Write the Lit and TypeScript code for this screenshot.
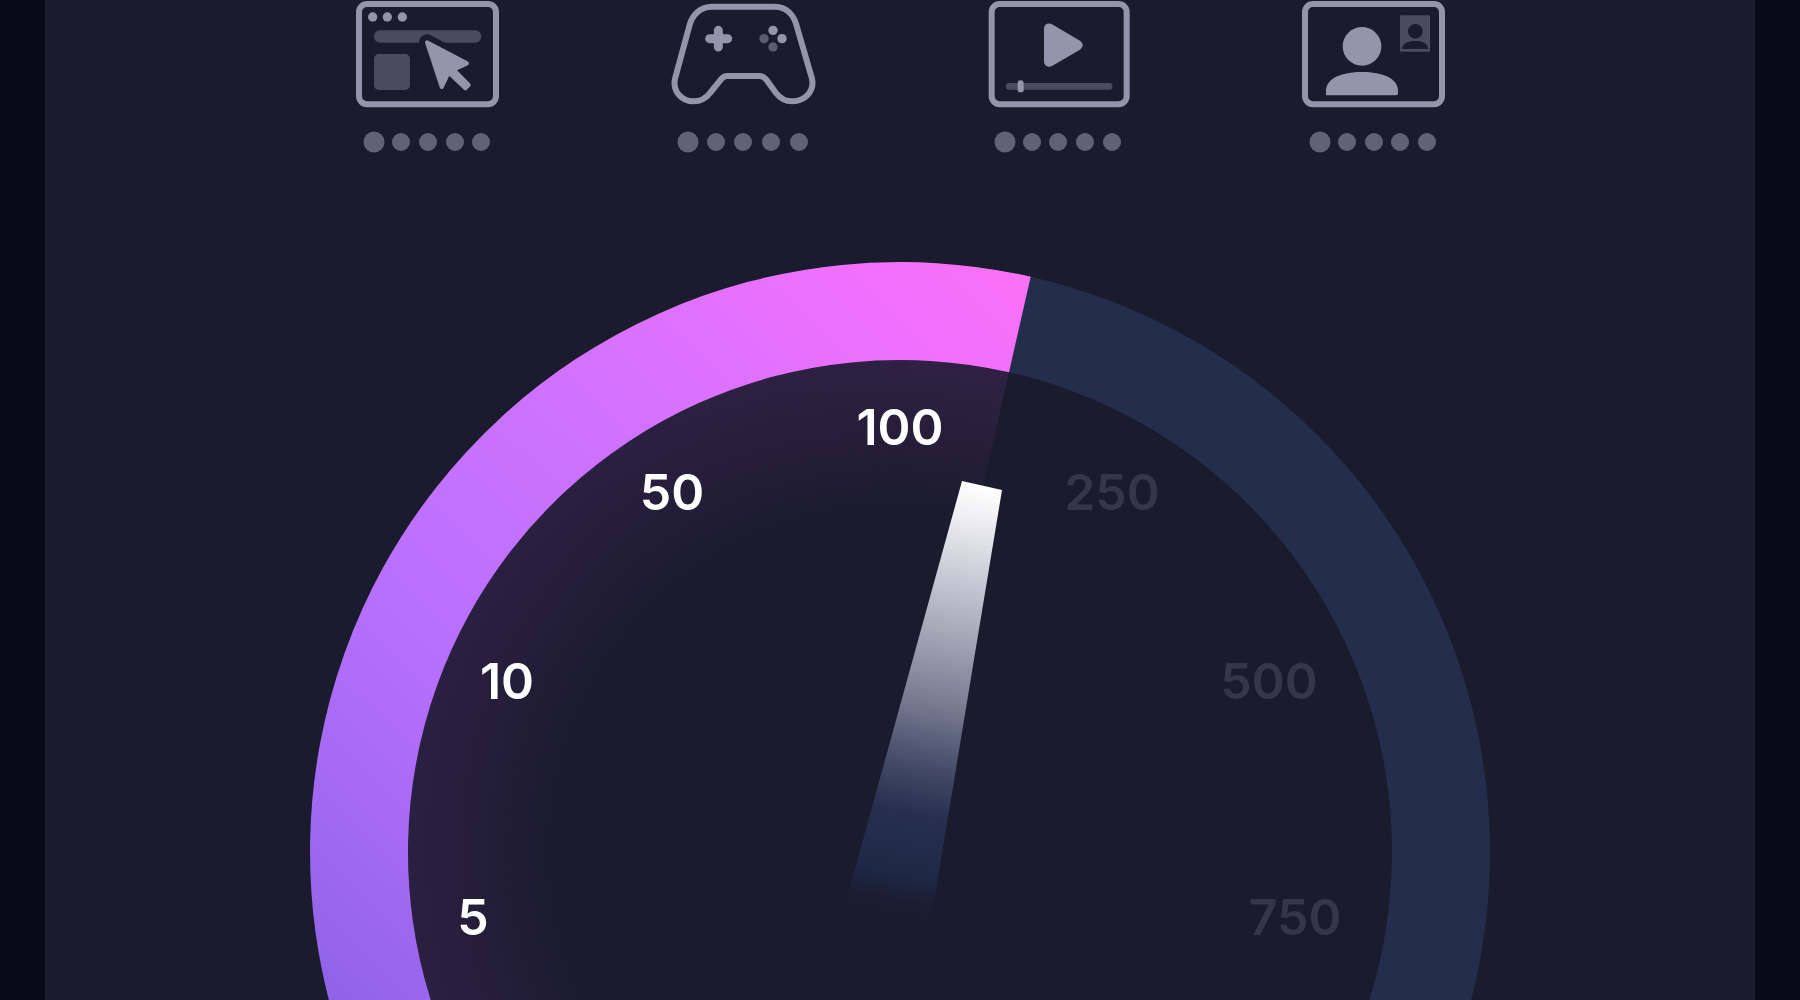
import { LitElement, html, svg, css } from "lit";
import { customElement } from "lit/decorators.js";

type Mark = { value: string; x: number; y: number; reached: boolean };

// Label positions are measured from the hub of the dial.
const MARKS: Mark[] = [
  { value: "5", x: -427, y: 65, reached: true },
  { value: "10", x: -393, y: -171, reached: true },
  { value: "50", x: -228, y: -360, reached: true },
  { value: "100", x: 0, y: -425, reached: true },
  { value: "250", x: 212, y: -360, reached: false },
  { value: "500", x: 369, y: -171, reached: false },
  { value: "750", x: 395, y: 65, reached: false },
];

const OUTER = 590;
const INNER = 492;
const NEEDLE_ANGLE = 12.8;

const polar = (radius: number, degrees: number) => {
  const a = (degrees * Math.PI) / 180;
  return `${(radius * Math.sin(a)).toFixed(2)} ${(-radius * Math.cos(a)).toFixed(2)}`;
};

const band = (from: number, to: number) => {
  const large = to - from > 180 ? 1 : 0;
  return `M${polar(OUTER, from)}A${OUTER} ${OUTER} 0 ${large} 1 ${polar(OUTER, to)}L${polar(INNER, to)}A${INNER} ${INNER} 0 ${large} 0 ${polar(INNER, from)}Z`;
};

const CURSOR = "M261 127L381 190L341 209L386 255L376 265L326 218L305 261Z";

const ICONS = [
  {
    label: "Browsing",
    box: "48 0 429 324",
    dots: [18, 45, 72, 99, 125],
    art: svg`
      <rect class="line" x="57" y="12" width="411" height="301" rx="24"></rect>
      <circle class="solid" cx="98" cy="51" r="14"></circle>
      <circle class="solid" cx="142" cy="51" r="14"></circle>
      <circle class="solid" cx="187" cy="51" r="14"></circle>
      <rect class="dim" x="102" y="91" width="322" height="37" rx="18"></rect>
      <rect class="dim" x="102" y="162" width="108" height="108" rx="15"></rect>
      <path class="halo" d=${CURSOR}></path>
      <path class="solid cursor" d=${CURSOR}></path>`,
  },
  {
    label: "Gaming",
    box: "33 0 429 324",
    dots: [17, 45, 72, 100, 128],
    art: svg`
      <path class="line" d="M155 20H345C378 20 402 44 410 78L456 236C464 274 434 304 397 304C376 304 361 296 348 279L318 238Q310 228 299 228H202Q191 228 183 238L150 279C137 296 122 304 101 304C65 304 37 274 45 236L88 78C97 44 122 20 155 20Z"></path>
      <path class="pad" d="M175 91V141M149 116H203"></path>
      <circle class="solid" cx="339" cy="91" r="14"></circle>
      <circle class="solid" cx="366" cy="116" r="14"></circle>
      <circle class="mid" cx="312" cy="116" r="14"></circle>
      <circle class="mid" cx="339" cy="141" r="14"></circle>`,
  },
  {
    label: "Streaming",
    box: "48 0 429 324",
    dots: [19, 46, 72, 99, 126],
    art: svg`
      <rect class="line" x="65" y="12" width="405" height="301" rx="24"></rect>
      <path class="solid" d="M222 88C222 73 233 67 246 73L330 122Q347 135 330 149L246 198C233 204 222 197 222 183Z"></path>
      <rect class="dim" x="108" y="249" width="319" height="20" rx="8"></rect>
      <rect class="solid" x="143" y="241" width="18" height="36" rx="8"></rect>`,
  },
  {
    label: "Video chat",
    box: "48 0 429 324",
    dots: [19, 46, 73, 99, 126],
    art: svg`
      <rect class="line" x="60" y="12" width="411" height="301" rx="24"></rect>
      <circle class="solid" cx="231" cy="139" r="58"></circle>
      <path class="solid" d="M123 286V272C123 236 168 216 231 216S339 236 339 272V280Q339 286 333 286Z"></path>
      <rect class="dim" x="345" y="46" width="90" height="109" rx="3"></rect>
      <circle class="cut" cx="391" cy="94" r="22"></circle>
      <path class="cut" d="M351 147C353 131 367 123 391 123S428 131 430 147Z"></path>`,
  },
];

@customElement("activity-score")
class ActivityScore extends LitElement {
  static properties = { item: { attribute: false } };
  declare item: (typeof ICONS)[number];

  static styles = css`
    :host {
      display: flex;
      flex-direction: column;
      gap: 23px;
      width: 143px;
    }
    svg {
      display: block;
      width: 100%;
      overflow: visible;
    }
    .line {
      fill: none;
      stroke: #9594aa;
      stroke-width: 18;
      stroke-linejoin: round;
    }
    .solid {
      fill: #9594aa;
    }
    .dim {
      fill: #4b4a5f;
    }
    .mid {
      fill: #5c5b70;
    }
    .cut {
      fill: #1a1b2d;
    }
    .halo {
      fill: #1a1b2d;
      stroke: #1a1b2d;
      stroke-width: 48;
      stroke-linejoin: round;
    }
    .cursor {
      stroke: #9594aa;
      stroke-width: 12;
      stroke-linejoin: round;
    }
    .pad {
      fill: none;
      stroke: #9594aa;
      stroke-width: 27;
      stroke-linecap: round;
    }
    .dot {
      fill: #626276;
    }
  `;

  render() {
    return html`
      <svg viewBox=${this.item.box} role="img" aria-label=${this.item.label}>${this.item.art}</svg>
      <svg viewBox="0 0 143 22" aria-hidden="true">
        ${this.item.dots.map(
          (x, i) => svg`<circle class="dot" cx=${x} cy="11" r=${i === 0 ? 10.5 : 9}></circle>`
        )}
      </svg>
    `;
  }
}

@customElement("speed-gauge")
class SpeedGauge extends LitElement {
  static styles = css`
    :host {
      display: block;
      width: 100%;
      max-width: 1180px;
    }
    svg {
      display: block;
      width: 100%;
    }
    .track {
      fill: #232e4c;
    }
    .mark {
      font-family: Inter, "Open Sans", sans-serif;
      font-size: 50px;
      font-weight: 600;
      text-anchor: middle;
      fill: #35364a;
    }
    .reached {
      fill: #ffffff;
    }
  `;

  render() {
    return html`
      <svg viewBox="-590 -590 1180 738" role="img" aria-label="Speed gauge">
        <defs>
          <linearGradient id="progress" gradientUnits="userSpaceOnUse" x1="-560" y1="148" x2="130" y2="-560">
            <stop offset="0" stop-color="#9163e7"></stop>
            <stop offset="0.17" stop-color="#a76af4"></stop>
            <stop offset="0.36" stop-color="#bb70ff"></stop>
            <stop offset="0.62" stop-color="#d272ff"></stop>
            <stop offset="0.86" stop-color="#ee70ff"></stop>
            <stop offset="1" stop-color="#f971f6"></stop>
          </linearGradient>
          <linearGradient id="tint" gradientUnits="userSpaceOnUse" x1="-440" y1="0" x2="60" y2="-440">
            <stop offset="0" stop-color="#2a2042"></stop>
            <stop offset="0.5" stop-color="#2a2041"></stop>
            <stop offset="1" stop-color="#302143"></stop>
          </linearGradient>
          <radialGradient id="falloff" gradientUnits="userSpaceOnUse" cx="0" cy="0" r="492">
            <stop offset="0.68" stop-color="#ffffff" stop-opacity="0"></stop>
            <stop offset="0.84" stop-color="#ffffff" stop-opacity="0.58"></stop>
            <stop offset="1" stop-color="#ffffff"></stop>
          </radialGradient>
          <mask id="fade" maskUnits="userSpaceOnUse" x="-492" y="-492" width="984" height="984">
            <circle r="492" fill="url(#falloff)"></circle>
          </mask>
          <linearGradient id="needle" gradientUnits="userSpaceOnUse" x1="82" y1="-366" x2="-5" y2="72">
            <stop offset="0" stop-color="#ffffff"></stop>
            <stop offset="0.08" stop-color="#ededf0"></stop>
            <stop offset="0.25" stop-color="#bcc0cc"></stop>
            <stop offset="0.5" stop-color="#777b91"></stop>
            <stop offset="0.64" stop-color="#454b69"></stop>
            <stop offset="0.75" stop-color="#262f50"></stop>
            <stop offset="0.89" stop-color="#1d2846"></stop>
            <stop offset="1" stop-color="#1a1b2d" stop-opacity="0"></stop>
          </linearGradient>
        </defs>
        <path class="track" d=${band(NEEDLE_ANGLE, 135)}></path>
        <path
          fill="url(#tint)"
          mask="url(#fade)"
          d="M0 0L${polar(INNER, -135)}A${INNER} ${INNER} 0 0 1 ${polar(INNER, NEEDLE_ANGLE)}Z"
        ></path>
        <path fill="url(#progress)" d=${band(-135, NEEDLE_ANGLE)}></path>
        <path fill="url(#needle)" d="M62 -371L102 -362L29 80L-58 64Z"></path>
        ${MARKS.map(
          (m) => svg`<text class="mark ${m.reached ? "reached" : ""}" x=${m.x} y=${m.y + 18}>${m.value}</text>`
        )}
      </svg>
    `;
  }
}

@customElement("app-root")
class AppRoot extends LitElement {
  static styles = css`
    :host {
      display: block;
      min-height: 100vh;
      padding: 0 2.5%;
      box-sizing: border-box;
      background: #0a0917;
    }
    .panel {
      display: flex;
      flex-direction: column;
      align-items: center;
      gap: 109px;
      min-height: 100vh;
      background: #1a1b2d;
    }
    .scores {
      display: flex;
      flex-wrap: wrap;
      justify-content: center;
      gap: 32px 172px;
    }
  `;

  render() {
    return html`
      <main class="panel">
        <section class="scores">
          ${ICONS.map((item) => html`<activity-score .item=${item}></activity-score>`)}
        </section>
        <speed-gauge></speed-gauge>
      </main>
    `;
  }
}
